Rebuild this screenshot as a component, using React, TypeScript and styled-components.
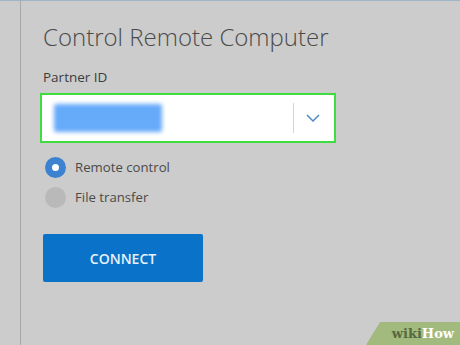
import React, { useState } from 'react'
import styled, { createGlobalStyle } from 'styled-components';

const GlobalStyle = createGlobalStyle`
  html, body {
    margin: 0;
    padding: 0;
    background: #cccccc;
    overflow: hidden;
  }
`;

const Screen = styled.div`
  position: relative;
  width: 460px;
  height: 345px;
  display: flex;
  background: #cccccc;
  border-top: 1px solid #9fb4c4;
  box-sizing: border-box;
  font-family: "Open Sans", "Noto Sans", sans-serif;
  color: #444;
  overflow: hidden;
`;

const Gutter = styled.div`
  width: 20px;
  flex-shrink: 0;
  border-right: 1px solid #a8a8a8;
`;

const Panel = styled.div`
  display: flex;
  flex-direction: column;
  padding: 20px 0 0 19px;
`;

const Title = styled.h1`
  margin: 0 0 0 3px;
  font-size: 24px;
  font-weight: 300;
  line-height: 32px;
  color: #4a4a4a;
`;

const Label = styled.div`
  margin: 15px 0 0 3px;
  font-size: 13.5px;
  line-height: 18px;
  color: #3c3c3c;
`;

const Field = styled.div`
  margin-top: 7px;
  width: 296px;
  height: 50px;
  box-sizing: border-box;
  border: 2px solid #3fdc3f;
  background: #ffffff;
  display: flex;
  align-items: center;
  padding: 0 14px 0 12px;
`;

const Blurred = styled.div`
  width: 108px;
  height: 28px;
  background: #66aafa;
  filter: blur(2px);
  border-radius: 2px;
`;

const Divider = styled.div`
  margin-left: auto;
  width: 1px;
  height: 30px;
  background: #d4d4d4;
`;

const Chevron = styled.svg`
  margin-left: 12px;
  width: 14px;
  height: 8px;
`;

const Options = styled.div`
  display: flex;
  flex-direction: column;
  gap: 9px;
  margin: 14px 0 0 5px;
`;

const Option = styled.label`
  display: flex;
  align-items: center;
  gap: 9px;
  font-size: 13.2px;
  line-height: 21px;
  color: #4a4a4a;
  cursor: pointer;
`;

const Dot = styled.span<{ $on: boolean }>`
  width: 21px;
  height: 21px;
  border-radius: 50%;
  background: ${(p) => (p.$on ? '#3d82d1' : '#b9b9b9')};
  display: flex;
  align-items: center;
  justify-content: center;
  &::after {
    content: '';
    width: 7px;
    height: 7px;
    border-radius: 50%;
    background: ${(p) => (p.$on ? '#ffffff' : 'transparent')};
  }
`;

const ConnectButton = styled.button`
  margin: 26px 0 0 3px;
  width: 160px;
  height: 48px;
  border: none;
  border-radius: 2px;
  background: #0a72c8;
  color: #e8f1fa;
  font-family: "Open Sans", "Noto Sans", sans-serif;
  font-size: 14px;
  font-weight: 600;
`;

const Badge = styled.div`
  position: absolute;
  right: 0;
  bottom: 0;
  width: 94px;
  height: 23px;
  background: #a3ba7f;
  clip-path: polygon(14px 0, 100% 0, 100% 100%, 0 100%);
  display: flex;
  align-items: center;
  justify-content: flex-end;
  padding-right: 6px;
  box-sizing: border-box;
  font-family: "DejaVu Serif", "Liberation Serif", serif;
  font-weight: bold;
  font-size: 13px;
`;

const Wiki = styled.span`
  color: #56693f;
`;

const How = styled.span`
  color: #ffffff;
`;

const options = ['Remote control', 'File transfer'];

export default function App() {
  const [mode, setMode] = useState(0);

  return (
    <>
      <GlobalStyle />
      <Screen>
        <Gutter />
        <Panel>
          <Title>Control Remote Computer</Title>
          <Label>Partner ID</Label>
          <Field>
            <Blurred />
            <Divider />
            <Chevron viewBox="0 0 14 8">
              <path d="M1 1 L7 7 L13 1" fill="none" stroke="#4f8bc4" strokeWidth="1.5" />
            </Chevron>
          </Field>
          <Options>
            {options.map((o, i) => (
              <Option key={o} onClick={() => setMode(i)}>
                <Dot $on={mode === i} />
                {o}
              </Option>
            ))}
          </Options>
          <ConnectButton>CONNECT</ConnectButton>
        </Panel>
        <Badge>
          <Wiki>wiki</Wiki>
          <How>How</How>
        </Badge>
      </Screen>
    </>
  )
}
